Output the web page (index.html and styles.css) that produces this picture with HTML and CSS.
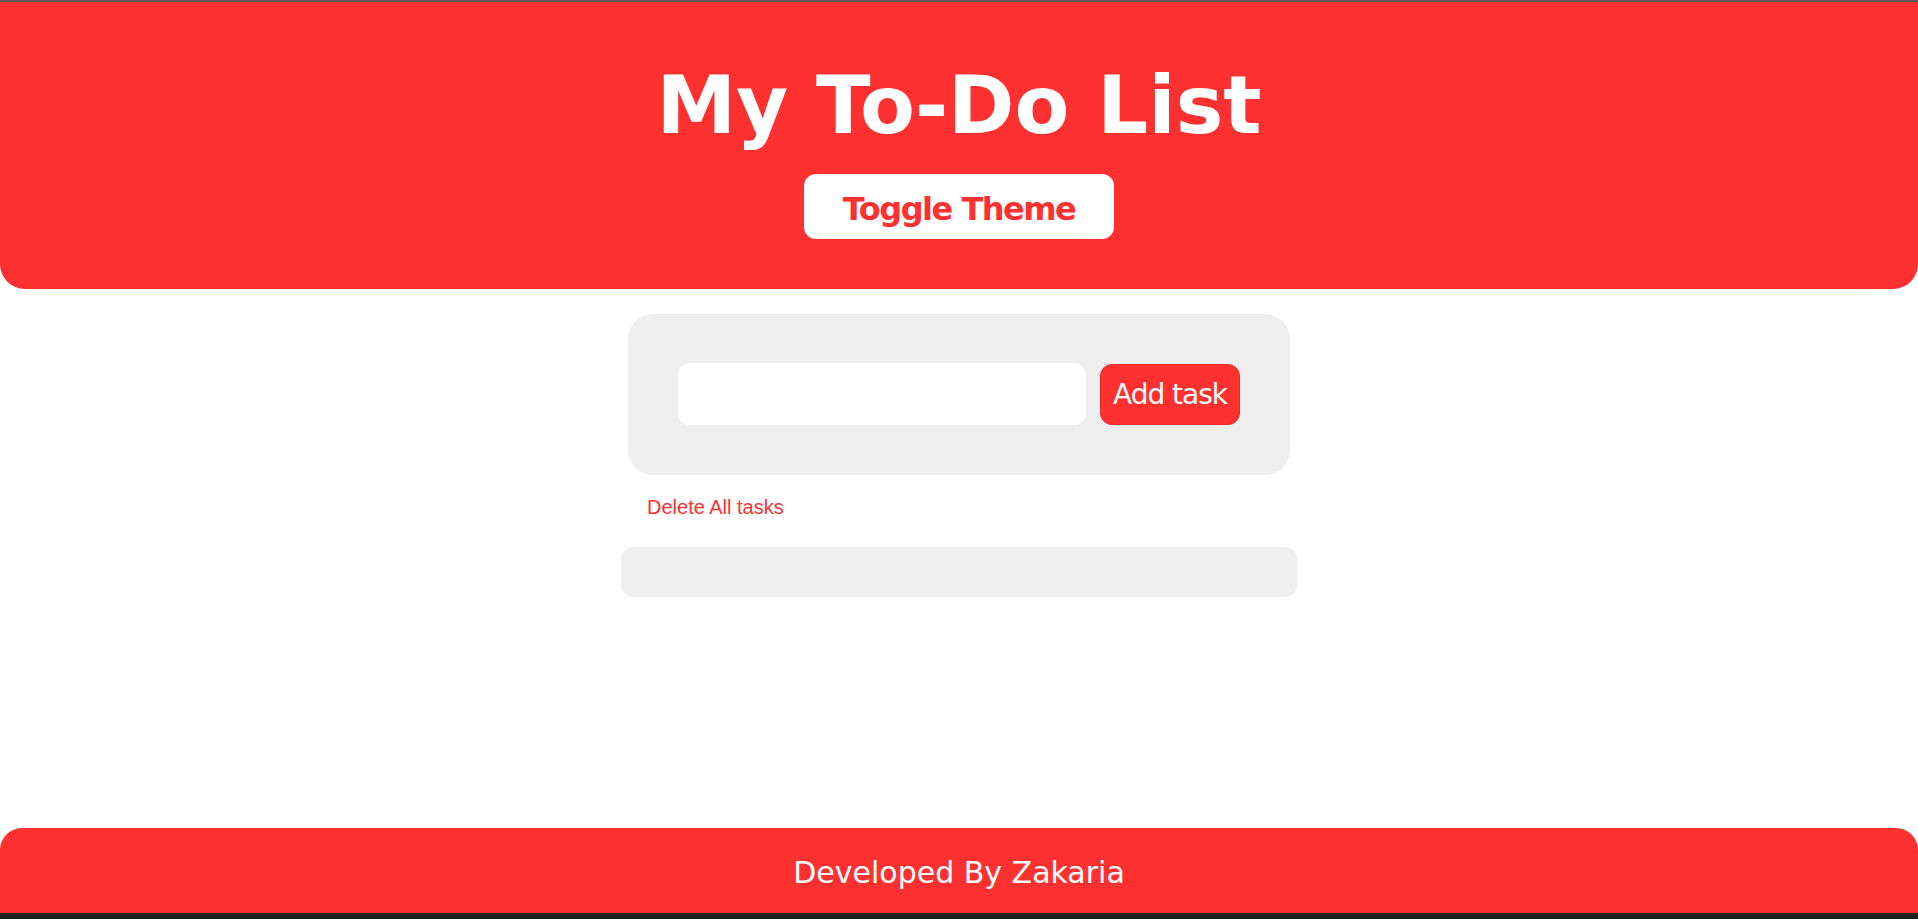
FILE: index.html
```html
<!DOCTYPE html>
<html lang="en">
<head>
<meta charset="utf-8">
<title>My To-Do List</title>
<link rel="stylesheet" href="styles.css">
</head>
<body>
<div class="page">
  <header class="header">
    <h1 class="title">My To-Do List</h1>
    <button class="toggle-btn">Toggle Theme</button>
  </header>
  <main class="main">
    <div class="input-card">
      <input class="task-input" type="text">
      <button class="add-btn">Add task</button>
    </div>
    <div class="delete-row">
      <a class="delete-all">Delete All tasks</a>
    </div>
    <ul class="task-list"></ul>
  </main>
  <footer class="footer">
    <p class="footer-text">Developed By Zakaria</p>
  </footer>
  <div class="bottom-bar"></div>
</div>
</body>
</html>
```

FILE: styles.css
```css
* { box-sizing: border-box; }

html, body {
  margin: 0;
  padding: 0;
  background: #ffffff;
}

.page {
  display: flex;
  flex-direction: column;
  height: 919px;
  overflow: hidden;
  border-top: 2px solid #5b5b5b;
}

.header {
  background: #ff3030;
  border-radius: 0 0 25px 25px;
  display: flex;
  flex-direction: column;
  align-items: center;
  padding: 57px 0 50px;
}

.title {
  margin: 0;
  font-family: "DejaVu Sans", Verdana, sans-serif;
  font-weight: bold;
  font-size: 80px;
  line-height: 93px;
  color: #ffffff;
  letter-spacing: 0;
}

.toggle-btn {
  margin-top: 22px;
  width: 310px;
  height: 65px;
  background: #ffffff;
  color: #ff3030;
  border: none;
  border-radius: 12px;
  font-family: "DejaVu Sans", Verdana, sans-serif;
  font-weight: bold;
  font-size: 32px;
  letter-spacing: -1.5px;
  padding: 4px 0 0;
  cursor: pointer;
}

.main {
  flex: 1;
  display: flex;
  flex-direction: column;
  align-items: center;
  padding-top: 25px;
}

.input-card {
  width: 662px;
  height: 161px;
  background: #eeeeee;
  border-radius: 25px;
  padding: 49px 50px 50px;
  display: flex;
  gap: 14px;
  align-items: flex-start;
}

.task-input {
  width: 408px;
  height: 62px;
  border: none;
  border-radius: 12px;
  background: #ffffff;
  outline: none;
}

.add-btn {
  width: 140px;
  height: 61px;
  margin-top: 1px;
  background: #ff3030;
  color: #ffffff;
  border: 1px solid #e82a2a;
  border-radius: 12px;
  font-family: "DejaVu Sans", Verdana, sans-serif;
  font-size: 28px;
  letter-spacing: -1px;
  padding: 0;
  cursor: pointer;
}

.delete-row {
  width: 662px;
  padding: 21px 0 0 19px;
}

.delete-all {
  font-family: "Liberation Sans", Arial, sans-serif;
  font-size: 20px;
  line-height: 23px;
  color: #ff3030;
  cursor: pointer;
}

.task-list {
  list-style: none;
  margin: 28px 0 0;
  padding: 0;
  width: 676px;
  height: 50px;
  background: #eeeeee;
  border-radius: 12px;
}

.footer {
  background: #ff3030;
  border-radius: 22px 22px 0 0;
  height: 85px;
  display: flex;
  align-items: center;
  justify-content: center;
  padding-top: 3px;
}

.footer-text {
  margin: 0;
  font-family: "DejaVu Sans", Verdana, sans-serif;
  font-size: 30px;
  color: #ffffff;
}

.bottom-bar {
  height: 6px;
  background: #202020;
}
```
